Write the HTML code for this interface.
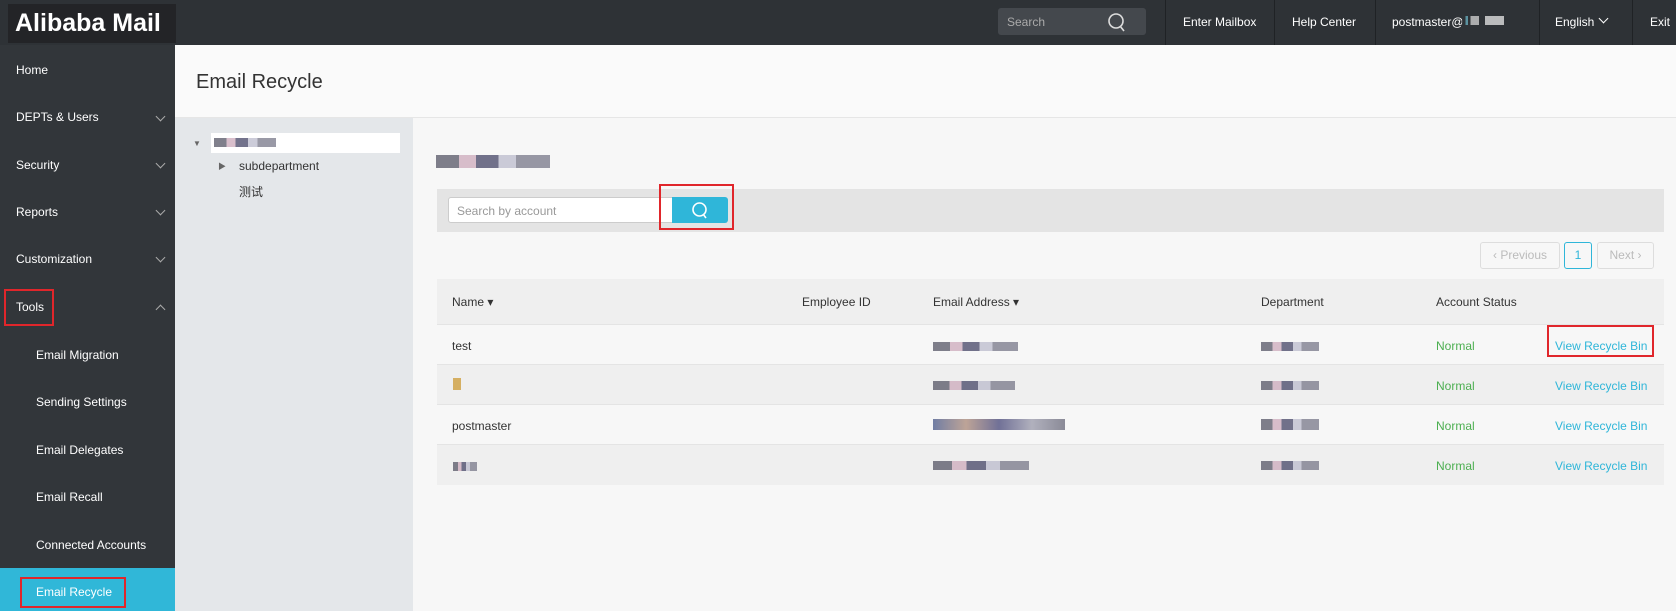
<!DOCTYPE html>
<html><head><meta charset="utf-8"><style>
*{margin:0;padding:0;box-sizing:border-box}
body{width:1676px;height:611px;overflow:hidden;background:#f7f7f7;font-family:"Liberation Sans","Noto Sans CJK SC",sans-serif;font-size:12px;color:#333;position:relative}
.a{position:absolute;white-space:nowrap}
#top{left:0;top:0;width:1676px;height:45px;background:#2e3236}
#side{left:0;top:45px;width:175px;height:566px;background:#32363a}
.nav{color:#fff;font-size:12px}
.sep{top:0;width:1px;height:45px;background:#1f2225}
.chev{width:7px;height:7px;border-right:1px solid #aaa;border-bottom:1px solid #aaa;transform:rotate(45deg)}
.rb{border:2px solid #e0262b}
.blur{height:9px;background:linear-gradient(90deg,#556 0 20%,#cab 20% 35%,#446 35% 55%,#bbc 55% 70%,#778 70%);opacity:.75}
</style></head><body>
<div class="a" id="top"></div>
<div class="a" style="left:8px;top:4px;width:168px;height:39px;background:#232427;color:#fff;font-weight:bold;font-size:25px;line-height:39px;padding-left:7px">Alibaba Mail</div>
<div class="a" style="left:998px;top:8px;width:148px;height:27px;background:#44484d;border-radius:3px"></div>
<div class="a" style="left:1007px;top:15px;color:#aaa">Search</div>
<svg class="a" style="left:1107px;top:11px" width="20" height="22" viewBox="0 0 20 22"><circle cx="9" cy="10" r="7" fill="none" stroke="#ddd" stroke-width="1.6"/><path d="M13 15l4 5" stroke="#ddd" stroke-width="1.6"/></svg>
<div class="a sep" style="left:1165px"></div><div class="a sep" style="left:1274px"></div><div class="a sep" style="left:1375px"></div><div class="a sep" style="left:1539px"></div><div class="a sep" style="left:1632px"></div>
<div class="a nav" style="left:1183px;top:15px">Enter Mailbox</div>
<div class="a nav" style="left:1292px;top:15px">Help Center</div>
<div class="a nav" style="left:1392px;top:15px">postmaster@</div>
<div class="a" style="left:1462px;top:16px;width:42px;height:9px;background:linear-gradient(90deg,#2e3236 0 8%,#6ab 8% 14%,#2e3236 14% 20%,#ccc 20% 40%,#2e3236 40% 55%,#ddd 55%);opacity:.8"></div>
<div class="a nav" style="left:1555px;top:15px">English</div>
<div class="a chev" style="left:1600px;top:15px;border-color:#fff"></div>
<div class="a nav" style="left:1650px;top:15px">Exit</div>

<div class="a" id="side"></div>
<div class="a nav" style="left:16px;top:63px">Home</div>
<div class="a nav" style="left:16px;top:110px">DEPTs &amp; Users</div>
<div class="a nav" style="left:16px;top:158px">Security</div>
<div class="a nav" style="left:16px;top:205px">Reports</div>
<div class="a nav" style="left:16px;top:252px">Customization</div>
<div class="a nav" style="left:16px;top:300px">Tools</div>
<div class="a chev" style="left:157px;top:113px"></div><div class="a chev" style="left:157px;top:160px"></div><div class="a chev" style="left:157px;top:207px"></div><div class="a chev" style="left:157px;top:254px"></div>
<div class="a chev" style="left:157px;top:306px;transform:rotate(225deg)"></div>
<div class="a rb" style="left:4px;top:289px;width:50px;height:37px"></div>
<div class="a nav" style="left:36px;top:348px">Email Migration</div>
<div class="a nav" style="left:36px;top:395px">Sending Settings</div>
<div class="a nav" style="left:36px;top:443px">Email Delegates</div>
<div class="a nav" style="left:36px;top:490px">Email Recall</div>
<div class="a nav" style="left:36px;top:538px">Connected Accounts</div>
<div class="a" style="left:0;top:568px;width:175px;height:43px;background:#30b7d8"></div>
<div class="a nav" style="left:36px;top:585px">Email Recycle</div>
<div class="a rb" style="left:20px;top:577px;width:106px;height:31px"></div>

<div class="a" style="left:175px;top:45px;width:1501px;height:73px;background:#fafafa;border-bottom:1px solid #e6e6e6"></div>
<div class="a" style="left:196px;top:71px;font-size:20px;color:#333">Email Recycle</div>
<div class="a" style="left:175px;top:118px;width:238px;height:493px;background:#e4e7ea"></div>
<div class="a" style="left:193px;top:139px;font-size:8px;color:#666">▼</div>
<div class="a" style="left:211px;top:133px;width:189px;height:20px;background:#fff"></div>
<div class="a blur" style="left:214px;top:138px;width:62px"></div>
<div class="a" style="left:218px;top:161px;font-size:8px;color:#666">▶</div>
<div class="a" style="left:239px;top:159px">subdepartment</div>
<div class="a" style="left:239px;top:183px">测试</div>

<div class="a blur" style="left:436px;top:155px;width:114px;height:13px"></div>
<div class="a" style="left:437px;top:189px;width:1227px;height:43px;background:#e4e4e4"></div>
<div class="a" style="left:448px;top:197px;width:225px;height:26px;background:#fff;border:1px solid #ccc;border-radius:3px 0 0 3px"></div>
<div class="a" style="left:457px;top:204px;color:#999">Search by account</div>
<div class="a" style="left:672px;top:197px;width:56px;height:26px;background:#2fb6d9;border-radius:0 3px 3px 0"></div>
<svg class="a" style="left:691px;top:201px" width="18" height="19" viewBox="0 0 18 19"><circle cx="8.5" cy="8.5" r="6.5" fill="none" stroke="#fff" stroke-width="1.6"/><path d="M12 13l3 4" stroke="#fff" stroke-width="1.6"/></svg>
<div class="a rb" style="left:659px;top:184px;width:75px;height:46px"></div>

<div class="a" style="left:1480px;top:242px;width:80px;height:27px;border:1px solid #ddd;border-radius:3px;color:#bbb;text-align:center;line-height:25px">‹ Previous</div>
<div class="a" style="left:1564px;top:242px;width:28px;height:27px;border:1px solid #2fb6d9;border-radius:3px;color:#2fb6d9;text-align:center;line-height:25px">1</div>
<div class="a" style="left:1597px;top:242px;width:57px;height:27px;border:1px solid #ddd;border-radius:3px;color:#bbb;text-align:center;line-height:25px">Next ›</div>

<div class="a" style="left:437px;top:279px;width:1227px;height:45px;background:#efefef"></div>
<div class="a" style="left:437px;top:364px;width:1227px;height:41px;background:#efefef;border-top:1px solid #e4e4e4;border-bottom:1px solid #e4e4e4"></div>
<div class="a" style="left:437px;top:444px;width:1227px;height:41px;background:#efefef;border-top:1px solid #e4e4e4"></div>
<div class="a" style="left:437px;top:324px;width:1227px;height:1px;background:#e4e4e4"></div>
<div class="a" style="left:452px;top:295px">Name ▾</div>
<div class="a" style="left:802px;top:295px">Employee ID</div>
<div class="a" style="left:933px;top:295px">Email Address ▾</div>
<div class="a" style="left:1261px;top:295px">Department</div>
<div class="a" style="left:1436px;top:295px">Account Status</div>

<div class="a" style="left:452px;top:339px">test</div>
<div class="a" style="left:452px;top:419px">postmaster</div>
<div class="a blur" style="left:453px;top:378px;width:8px;height:12px;background:#c93"></div>
<div class="a blur" style="left:453px;top:462px;width:24px"></div>
<div class="a blur" style="left:933px;top:342px;width:85px"></div>
<div class="a blur" style="left:933px;top:381px;width:82px"></div>
<div class="a blur" style="left:933px;top:419px;width:132px;height:11px;background:linear-gradient(90deg,#458,#a87,#447,#99a,#667)"></div>
<div class="a blur" style="left:933px;top:461px;width:96px"></div>
<div class="a blur" style="left:1261px;top:342px;width:58px"></div>
<div class="a blur" style="left:1261px;top:381px;width:58px"></div>
<div class="a blur" style="left:1261px;top:419px;width:58px;height:11px"></div>
<div class="a blur" style="left:1261px;top:461px;width:58px"></div>
<div class="a" style="left:1436px;top:339px;color:#4caf50">Normal</div>
<div class="a" style="left:1436px;top:379px;color:#4caf50">Normal</div>
<div class="a" style="left:1436px;top:419px;color:#4caf50">Normal</div>
<div class="a" style="left:1436px;top:459px;color:#4caf50">Normal</div>
<div class="a" style="left:1555px;top:339px;color:#2fb6d9">View Recycle Bin</div>
<div class="a" style="left:1555px;top:379px;color:#2fb6d9">View Recycle Bin</div>
<div class="a" style="left:1555px;top:419px;color:#2fb6d9">View Recycle Bin</div>
<div class="a" style="left:1555px;top:459px;color:#2fb6d9">View Recycle Bin</div>
<div class="a rb" style="left:1547px;top:325px;width:107px;height:32px"></div>
</body></html>
